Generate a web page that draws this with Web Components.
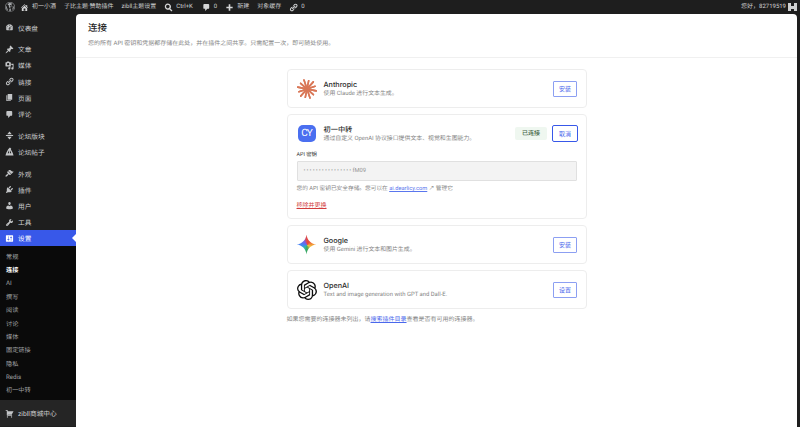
<!DOCTYPE html>
<html lang="zh-CN">
<head>
<meta charset="utf-8">
<title>连接</title>
<style>
html, body { margin: 0; height: 100%; overflow: hidden; background: #1e1e1e; }
body { font-family: Roboto, "Noto Sans CJK SC", sans-serif; text-rendering: geometricPrecision; }
</style>
</head>
<body>
<admin-app></admin-app>

<script>
const ICONS = {
  dashboard: 'M3.76 16h12.48c1.1-1.37 1.76-3.11 1.76-5 0-4.42-3.58-8-8-8s-8 3.58-8 8c0 1.89.66 3.63 1.76 5zM10 4c.55 0 1 .45 1 1s-.45 1-1 1-1-.45-1-1 .45-1 1-1zM6 6c.55 0 1 .45 1 1s-.45 1-1 1-1-.45-1-1 .45-1 1-1zm8 0c.55 0 1 .45 1 1s-.45 1-1 1-1-.45-1-1 .45-1 1-1zm-5.37 5.55L12 7v6c0 1.1-.9 2-2 2s-2-.9-2-2c0-.57.24-1.08.63-1.45zM4 10c.55 0 1 .45 1 1s-.45 1-1 1-1-.45-1-1 .45-1 1-1zm12 0c.55 0 1 .45 1 1s-.45 1-1 1-1-.45-1-1 .45-1 1-1zm-5 3c0-.55-.45-1-1-1s-1 .45-1 1 .45 1 1 1 1-.45 1-1z',
  post: 'M10.44 3.02l1.82-1.82 6.36 6.35-1.83 1.82c-1.05-.68-2.48-.57-3.41.36l-.75.75c-.92.93-1.04 2.35-.35 3.41l-1.83 1.82-2.41-2.41-2.8 2.79c-.42.42-3.38 2.71-3.8 2.29s1.86-3.39 2.28-3.81l2.79-2.79L4.1 9.36l1.83-1.82c1.05.69 2.48.57 3.4-.36l.75-.75c.93-.92 1.05-2.35.36-3.41z',
  media: 'M13 11V4c0-.55-.45-1-1-1h-1.67L9 1H5L3.67 3H2c-.55 0-1 .45-1 1v7c0 .55.45 1 1 1h10c.55 0 1-.45 1-1zM7 4.5c1.38 0 2.5 1.12 2.5 2.5S8.38 9.5 7 9.5 4.5 8.38 4.5 7 5.62 4.5 7 4.5zM14 6h5v10.5c0 1.38-1.12 2.5-2.5 2.5S14 17.88 14 16.5s1.12-2.5 2.5-2.5c.17 0 .34.02.5.05V9h-3V6zm-4 8.05V13h2v3.5c0 1.38-1.12 2.5-2.5 2.5S7 17.88 7 16.5 8.12 14 9.5 14c.17 0 .34.02.5.05z',
  links: 'M17.74 2.76c1.68 1.69 1.68 4.41 0 6.1l-1.53 1.52c-1.12 1.12-2.7 1.47-4.14 1.09l2.62-2.61.76-.77.76-.76c.84-.84.84-2.2 0-3.04-.84-.85-2.2-.85-3.04 0l-.77.76-3.38 3.38c-.37-1.44-.02-3.02 1.1-4.14l1.52-1.53c1.69-1.68 4.42-1.68 6.1 0zM8.59 13.43l5.34-5.34c.42-.42.42-1.1 0-1.52-.44-.43-1.13-.39-1.53 0l-5.33 5.34c-.42.42-.42 1.1 0 1.52.44.43 1.13.39 1.52 0zm-.76 2.29l4.14-4.15c.38 1.44.03 3.02-1.09 4.14l-1.52 1.53c-1.69 1.68-4.41 1.68-6.1 0-1.68-1.68-1.68-4.42 0-6.1l1.53-1.52c1.12-1.12 2.7-1.47 4.14-1.1l-4.14 4.15c-.85.84-.85 2.2 0 3.05.84.84 2.2.84 3.04 0z',
  page: 'M6 15V2h10v13H6zm-1 1h8v2H3V5h2v11z',
  comment: 'M5 2h9c1.1 0 2 .9 2 2v7c0 1.1-.9 2-2 2h-2l-5 5v-5H5c-1.1 0-2-.9-2-2V4c0-1.1.9-2 2-2z',
  board: 'M10 1l5 6H5zM2 8.8h16v2.4H2zM5 13h10l-5 6z',
  topic: 'M11 1l3 3-1 1 4 8 2 6H1l2-6 4-8zM9 7l-3 7h3zm2 0v7h3z',
  appearance: 'M14.48 11.06L7.41 3.99l1.5-1.5c.5-.56 2.3-.47 3.51.32 1.21.8 1.43 1.28 2.91 2.1 1.18.64 2.45 1.26 4.45.85zm-.71.71L6.7 4.7 4.93 6.47c-.39.39-.39 1.02 0 1.41l1.06 1.06c.39.39.39 1.03 0 1.42-.6.6-1.43 1.11-2.21 1.69-.35.26-.7.53-1.01.84-1.32 1.32-2.2 3.2-1.5 3.9.7.7 2.58-.18 3.9-1.5.31-.31.58-.66.84-1.01.58-.78 1.09-1.61 1.69-2.21.39-.39 1.03-.39 1.42 0l1.06 1.06c.39.39 1.02.39 1.41 0z',
  plugins: 'M13.11 4.36L9.87 7.6 8 5.73l3.24-3.24c.35-.34 1.05-.2 1.56.32.52.51.66 1.21.31 1.55zm-8 1.77l.91-1.12 9.01 9.01-1.19.84c-.71.71-2.63 1.16-3.82 1.16H6.14L4.9 17.26c-.59.59-1.54.59-2.12 0-.59-.58-.59-1.53 0-2.12l1.24-1.24v-3.88c0-1.13.4-3.19 1.09-3.89zm7.26 3.97l3.24-3.24c.34-.35 1.04-.21 1.55.31.52.51.66 1.21.31 1.55l-3.24 3.25z',
  users: 'M10 9.25c-2.27 0-2.73-3.44-2.73-3.44C7 4.02 7.82 2 9.97 2c2.16 0 2.98 2.02 2.71 3.81 0 0-.41 3.44-2.68 3.44zm0 2.57L12.72 10c2.39 0 4.52 2.33 4.52 4.53v2.49s-3.65 1.13-7.24 1.13c-3.65 0-7.24-1.13-7.24-1.13v-2.49c0-2.25 1.94-4.48 4.47-4.48z',
  tools: 'M16.68 9.77c-1.34 1.34-3.3 1.67-4.95.99l-5.41 6.52c-.99.99-2.59.99-3.58 0s-.99-2.59 0-3.57l6.52-5.42c-.68-1.65-.35-3.61.99-4.95 1.28-1.28 3.12-1.62 4.72-1.06l-2.89 2.89 2.82 2.82 2.86-2.87c.53 1.58.18 3.39-1.08 4.65zM3.81 16.21c.4.39 1.04.39 1.43 0 .4-.4.4-1.04 0-1.43-.39-.4-1.03-.4-1.43 0-.39.39-.39 1.03 0 1.43z',
  settings: 'M18 16V4c0-.55-.45-1-1-1H3c-.55 0-1 .45-1 1v12c0 .55.45 1 1 1h14c.55 0 1-.45 1-1zM8 11h1c.55 0 1 .45 1 1s-.45 1-1 1H8v1.5c0 .28-.22.5-.5.5s-.5-.22-.5-.5V13H6c-.55 0-1-.45-1-1s.45-1 1-1h1V5.5c0-.28.22-.5.5-.5s.5.22.5.5V11zm5-2h-1c-.55 0-1-.45-1-1s.45-1 1-1h1V5.5c0-.28.22-.5.5-.5s.5.22.5.5V7h1c.55 0 1 .45 1 1s-.45 1-1 1h-1v5.5c0 .28-.22.5-.5.5s-.5-.22-.5-.5V9z',
  cart: 'M6 13h9c.55 0 1 .45 1 1s-.45 1-1 1H5c-.55 0-1-.45-1-1V4H2c-.55 0-1-.45-1-1s.45-1 1-1h3c.55 0 1 .45 1 1v2h13l-4 7H6v1zm-.5 3c.83 0 1.5.67 1.5 1.5S6.33 19 5.5 19 4 18.33 4 17.5 4.67 16 5.5 16zm9 0c.83 0 1.5.67 1.5 1.5s-.67 1.5-1.5 1.5-1.5-.67-1.5-1.5.67-1.5 1.5-1.5z',
  home: 'M16 8.5l1.53 1.53-1.06 1.06L10 4.62l-6.47 6.47-1.06-1.06L10 2.5l4 4v-2h2v4zm-6-2.46l6 5.99V18H4v-5.97zM12 17v-5H8v5h4z',
  search: 'M8.5 1a7 7 0 0 1 5.6 11.2l4.6 4.6-2 2-4.6-4.6A7 7 0 1 1 8.5 1zm0 3a4 4 0 1 0 0 8 4 4 0 0 0 0-8z',
  plus: 'M17 8.2v3.6h-5.2V17H8.2v-5.2H3V8.2h5.2V3h3.6v5.2z',
  wp: 'M20 10a10 10 0 1 1-20 0 10 10 0 0 1 20 0zm-1 0a9 9 0 1 0-18 0 9 9 0 0 0 18 0zM2.5 7l3.8 10.3c-2.5-1.2-4.2-3.9-4.2-7.3 0-1 .1-2.1.4-3zm13.4 5.4-.7 2.2-2.7-8c.4 0 .8-.1.8-.1.4 0 .4-.6 0-.6 0 0-1.2.1-2 .1-.7 0-1.9-.1-1.9-.1-.4 0-.4.6 0 .6 0 0 .4.1.8.1l1.1 3.1-1.6 4.8-2.7-7.9c.4 0 .8-.1.8-.1.4 0 .4-.6 0-.6 0 0-1.2.1-2 .1h-.5C5.7 2.8 7.7 1.9 10 1.9c1.8 0 3.4.6 4.7 1.7-1 0-1.6.8-1.6 1.7 0 .8.4 1.4.9 2.2.4.7.8 1.5.8 2.7 0 .8-.3 1.7-.9 2.2zM10.1 10.9l2.3 6.3.1.1c-.8.3-1.6.4-2.5.4-.7 0-1.4-.1-2.1-.3zm6.6-4.4c.8 1.2 1.2 2.1 1.2 3.5 0 2.6-1.3 4.9-3.4 6.2l2.1-6c.4-1 .5-1.8.5-2.5 0-.2 0-.5-.4-1.2z'
};

function icon(name, size) {
  return `<svg width="${size}" height="${size}" viewBox="0 0 20 20" fill="currentColor"><path fill-rule="evenodd" d="${ICONS[name]}"/></svg>`;
}

class AdminBar extends HTMLElement {
  connectedCallback() {
    this.attachShadow({mode: 'open'});
    this.shadowRoot.innerHTML = `
      <style>
        :host { display: flex; align-items: center; height: 14px; background: #1e1e1e; color: #cfd0d1;
                font-size: 6px; line-height: 14px; white-space: nowrap; }
        .wp { display: flex; width: 20px; justify-content: center; color: #a7aaad; }
        .it { display: flex; align-items: center; gap: 3px; margin-right: 8px; }
        .it svg { color: #d5d6d7; }
        .ctrl { margin-right: 9px; }
        .right { margin-left: auto; display: flex; align-items: center; gap: 2px; padding-right: 3px; }
        .avatar { display: block; width: 9px; height: 8px; background:
          linear-gradient(#1e1e1e,#1e1e1e) 50% 0/3px 3px no-repeat,
          linear-gradient(#1e1e1e,#1e1e1e) 50% 100%/3px 2px no-repeat, #cfd0d1; }
      </style>
      <span class="wp">${icon('wp', 10)}</span>
      <span class="it">${icon('home', 9)}初一小酒</span>
      <span class="it">子比主题·赞助插件</span>
      <span class="it">zibll主题设置</span>
      <span class="it ctrl">${icon('search', 9)}Ctrl+K</span>
      <span class="it">${icon('comment', 9)}0</span>
      <span class="it">${icon('plus', 9)}新建</span>
      <span class="it">对象缓存</span>
      <span class="it">${icon('links', 9)}0</span>
      <span class="right">您好，82719519<span class="avatar"></span></span>
    `;
  }
}

class SideItem extends HTMLElement {
  connectedCallback() {
    const active = this.hasAttribute('active');
    this.attachShadow({mode: 'open'});
    this.shadowRoot.innerHTML = `
      <style>
        :host { display: flex; align-items: center; height: 16.2px; color: #cfd0d1; font-size: 6.7px;
                white-space: nowrap; position: relative; }
        :host([active]) { background: #3858e9; color: #fff; }
        :host([shade]) { background: #252525; height: 26px; }
        .ic { display: flex; width: 18px; justify-content: center; color: #c3c5c7; flex: none; }
        :host([active]) .ic { color: #fff; }
        .arrow { position: absolute; right: 0; top: 50%; margin-top: -4px; border: 4px solid transparent;
                 border-right-color: #fff; border-left-width: 0; }
      </style>
      <span class="ic">${icon(this.getAttribute('icon'), 9)}</span><slot></slot>
      ${active ? '<span class="arrow"></span>' : ''}
    `;
  }
}

class SubItem extends HTMLElement {
  connectedCallback() {
    this.attachShadow({mode: 'open'});
    this.shadowRoot.innerHTML = `
      <style>
        :host { display: flex; align-items: center; height: 13.35px; padding-left: 6px; color: #a0a2a4;
                font-size: 6.2px; white-space: nowrap; }
        :host([current]) { color: #fff; font-weight: 600; }
      </style>
      <slot></slot>
    `;
  }
}

class SideBar extends HTMLElement {
  connectedCallback() {
    this.attachShadow({mode: 'open'});
    this.shadowRoot.innerHTML = `
      <style>
        :host { display: block; width: 76px; flex: none; background: #1e1e1e; overflow: hidden; }
        .group { display: block; margin-top: 5.5px; }
        .group:first-child { margin-top: 6px; }
        .sub { background: #0a0a0a; padding: 3.4px 0 3.6px; }
      </style>
      <div class="group"><side-item icon="dashboard">仪表盘</side-item></div>
      <div class="group">
        <side-item icon="post">文章</side-item>
        <side-item icon="media">媒体</side-item>
        <side-item icon="links">链接</side-item>
        <side-item icon="page">页面</side-item>
        <side-item icon="comment">评论</side-item>
      </div>
      <div class="group">
        <side-item icon="board">论坛版块</side-item>
        <side-item icon="topic">论坛帖子</side-item>
      </div>
      <div class="group">
        <side-item icon="appearance">外观</side-item>
        <side-item icon="plugins">插件</side-item>
        <side-item icon="users">用户</side-item>
        <side-item icon="tools">工具</side-item>
        <side-item icon="settings" active>设置</side-item>
        <div class="sub">
          <sub-item>常规</sub-item>
          <sub-item current>连接</sub-item>
          <sub-item>AI</sub-item>
          <sub-item>撰写</sub-item>
          <sub-item>阅读</sub-item>
          <sub-item>讨论</sub-item>
          <sub-item>媒体</sub-item>
          <sub-item>固定链接</sub-item>
          <sub-item>隐私</sub-item>
          <sub-item>Redis</sub-item>
          <sub-item>初一中转</sub-item>
        </div>
      </div>
      <side-item icon="cart" shade>zibll商城中心</side-item>
    `;
  }
}

class ConnectorCard extends HTMLElement {
  connectedCallback() {
    const name = this.getAttribute('name');
    const desc = this.getAttribute('desc');
    const action = this.getAttribute('action');
    const connected = this.hasAttribute('connected');
    this.attachShadow({mode: 'open'});
    this.shadowRoot.innerHTML = `
      <style>
        :host { display: block; background: #fff; border: 1px solid #ededed; border-radius: 4px; padding: 0 7.5px 0 9px; }
        .head { display: flex; align-items: center; height: 37px; }
        .logo { display: flex; width: 20px; height: 20px; align-items: center; justify-content: center; flex: none; margin-right: 7px; }
        .txt { flex: 1; min-width: 0; padding-top: 1px; }
        .name { font-family: Inter, "Noto Sans CJK SC", sans-serif; font-size: 7.2px; line-height: 10px; font-weight: 500; color: #2a2a2a; }
        .desc { font-size: 5.9px; line-height: 8px; color: #858585; }
        .badge { font-size: 6px; line-height: 13px; padding: 0 7px; background: #eff7f0; color: #3f6646;
                 border-radius: 2px; margin-right: 5px; font-weight: 500; }
        button { font: inherit; font-size: 6px; width: 24px; height: 16px; padding: 0; background: #fff; color: #4a68ec;
                 border: 1px solid #8c9ff2; border-radius: 1px; margin-right: 1px; }
        button.on { width: 26px; height: 17px; border-color: #3858e9; margin-right: 0; border-radius: 2px; }
      </style>
      <div class="head">
        <span class="logo"><slot name="logo"></slot></span>
        <div class="txt"><div class="name">${name}</div><div class="desc">${desc}</div></div>
        ${connected ? '<span class="badge">已连接</span>' : ''}
        <button class="${connected ? 'on' : ''}">${action}</button>
      </div>
      <slot></slot>
    `;
  }
}

class KeyPanel extends HTMLElement {
  connectedCallback() {
    this.attachShadow({mode: 'open'});
    this.shadowRoot.innerHTML = `
      <style>
        :host { display: block; padding: 0 1.5px 8px 0; }
        .label { font-size: 5.4px; line-height: 8px; color: #333; margin-top: -1px; }
        .input { height: 20px; box-sizing: border-box; margin-top: 2px; padding: 0 6px; background: #f3f3f3;
                 border: 1px solid #e0e0e0; font-size: 5.8px; color: #939393; border-radius: 1px; line-height: 18px; }
        .dots { letter-spacing: 1.1px; }
        .help { font-size: 5.7px; line-height: 8px; margin-top: 4px; color: #858585; }
        a { color: #5a76ee; text-decoration: underline; text-decoration-thickness: .5px; }
        a.rm { display: block; color: #d23c3c; font-size: 6px; line-height: 9px; margin-top: 8px; }
      </style>
      <div class="label">API 密钥</div>
      <div class="input"><span class="dots">••••••••••••••••</span>fM09</div>
      <div class="help">您的 API 密钥已安全存储。您可以在 <a>ai.dearlicy.com</a> ↗ 管理它</div>
      <a class="rm">移除并更换</a>
    `;
  }
}

class ConnectionsPage extends HTMLElement {
  connectedCallback() {
    this.attachShadow({mode: 'open'});
    const ray = [];
    for (let i = 0; i < 12; i++) {
      const a = i * Math.PI / 6 + .2;
      const r = i % 2 ? 8.5 : 9.5;
      ray.push(`<line x1="${(10 - Math.cos(a) * r).toFixed(1)}" y1="${(10 - Math.sin(a) * r).toFixed(1)}" x2="${(10 + Math.cos(a) * r).toFixed(1)}" y2="${(10 + Math.sin(a) * r).toFixed(1)}"/>`);
    }
    this.shadowRoot.innerHTML = `
      <style>
        :host { display: block; flex: 1; min-width: 0; background: #fff; margin-right: 3px; border-radius: 4px 4px 0 0; overflow: hidden; color: #1e1e1e; }
        header { height: 44px; box-sizing: border-box; padding: 9px 12px 0; border-bottom: 1px solid #f0f0f0; }
        h1 { margin: 0; font-size: 9.5px; line-height: 12px; font-weight: 500; }
        header p { margin: 5px 0 0; font-size: 6px; line-height: 8px; color: #858585; }
        .list { width: 300px; margin: 11px auto 0; display: flex; flex-direction: column; gap: 6px; }
        connector-card { box-sizing: border-box; }
        .foot { margin: 1px 0 0; font-size: 6px; line-height: 8px; color: #858585; }
        .foot a { color: #4a68ec; text-decoration: underline; text-decoration-thickness: .5px; }
        .cy { display: flex; width: 18px; height: 17px; border-radius: 5px; background: #4a6ff0; color: #fff; font-size: 10px;
              font-weight: 400; align-items: center; justify-content: center; letter-spacing: -1px; }
        .gem { display: block; width: 20px; height: 20px;
               background: conic-gradient(from 0deg, #e9493b 0 10%, #f2a33a 25%, #f4c542 32%, #3ba55d 50%, #2fbb9c 60%, #4285f4 75%, #7b5ee6 90%, #e9493b);
               clip-path: path('M10 0C10.6 5.6 14.4 9.4 20 10 14.4 10.6 10.6 14.4 10 20 9.4 14.4 5.6 10.6 0 10 5.6 9.4 9.4 5.6 10 0Z'); }
      </style>
      <header>
        <h1>连接</h1>
        <p>您的所有 API 密钥和凭据都存储在此处，并在插件之间共享。只需配置一次，即可随处使用。</p>
      </header>
      <div class="list">
        <connector-card name="Anthropic" desc="使用 Claude 进行文本生成。" action="安装">
          <svg slot="logo" width="20" height="20" viewBox="0 0 20 20" stroke="#d97757" stroke-width="1.6" stroke-linecap="round">${ray.join('')}</svg>
        </connector-card>
        <connector-card name="初一中转" desc="通过自定义 OpenAI 协议接口提供文本、视觉和生图能力。" action="取消" connected>
          <span slot="logo" class="cy">CY</span>
          <key-panel></key-panel>
        </connector-card>
        <connector-card name="Google" desc="使用 Gemini 进行文本和图片生成。" action="安装">
          <span slot="logo" class="gem"></span>
        </connector-card>
        <connector-card name="OpenAI" desc="Text and image generation with GPT and Dall-E." action="设置">
          <svg slot="logo" width="20" height="20" viewBox="0 0 24 24" fill="#0d0d0d"><path d="M22.2819 9.8211a5.9847 5.9847 0 0 0-.5157-4.9108 6.0462 6.0462 0 0 0-6.5098-2.9A6.0651 6.0651 0 0 0 4.9807 4.1818a5.9847 5.9847 0 0 0-3.9977 2.9 6.0462 6.0462 0 0 0 .7427 7.0966 5.98 5.98 0 0 0 .511 4.9107 6.051 6.051 0 0 0 6.5146 2.9001A5.9847 5.9847 0 0 0 13.2599 24a6.0557 6.0557 0 0 0 5.7718-4.2058 5.9894 5.9894 0 0 0 3.9977-2.9001 6.0557 6.0557 0 0 0-.7475-7.0729zm-9.022 12.6081a4.4755 4.4755 0 0 1-2.8764-1.0408l.1419-.0804 4.7783-2.7582a.7948.7948 0 0 0 .3927-.6813v-6.7369l2.02 1.1686a.071.071 0 0 1 .038.052v5.5826a4.504 4.504 0 0 1-4.4945 4.4944zm-9.6607-4.1254a4.4708 4.4708 0 0 1-.5346-3.0137l.142.0852 4.783 2.7582a.7712.7712 0 0 0 .7806 0l5.8428-3.3685v2.3324a.0804.0804 0 0 1-.0332.0615L9.74 19.9502a4.4992 4.4992 0 0 1-6.1408-1.6464zM2.3408 7.8956a4.485 4.485 0 0 1 2.3655-1.9728V11.6a.7664.7664 0 0 0 .3879.6765l5.8144 3.3543-2.0201 1.1685a.0757.0757 0 0 1-.071 0l-4.8303-2.7865A4.504 4.504 0 0 1 2.3408 7.872zm16.5963 3.8558L13.1038 8.364 15.1192 7.2a.0757.0757 0 0 1 .071 0l4.8303 2.7913a4.4944 4.4944 0 0 1-.6765 8.1042v-5.6772a.79.79 0 0 0-.407-.667zm2.0107-3.0231l-.142-.0852-4.7735-2.7818a.7759.7759 0 0 0-.7854 0L9.409 9.2297V6.8974a.0662.0662 0 0 1 .0284-.0615l4.8303-2.7866a4.4992 4.4992 0 0 1 6.6802 4.66zM8.3065 12.863l-2.02-1.1638a.0804.0804 0 0 1-.038-.0567V6.0742a4.4992 4.4992 0 0 1 7.3757-3.4537l-.142.0805L8.704 5.459a.7948.7948 0 0 0-.3927.6813zm1.0976-2.3654l2.602-1.4998 2.6069 1.4998v2.9994l-2.5974 1.4997-2.6067-1.4997Z"/></svg>
        </connector-card>
        <p class="foot">如果您需要的连接器未列出，请<a>搜索插件目录</a>查看是否有可用的连接器。</p>
      </div>
    `;
  }
}

class AdminApp extends HTMLElement {
  connectedCallback() {
    this.attachShadow({mode: 'open'});
    this.shadowRoot.innerHTML = `
      <style>
        :host { display: flex; flex-direction: column; height: 100vh; overflow: hidden; }
        .body { flex: 1; display: flex; min-height: 0; }
      </style>
      <admin-bar></admin-bar>
      <div class="body">
        <side-bar></side-bar>
        <connections-page></connections-page>
      </div>
    `;
  }
}

customElements.define('side-item', SideItem);
customElements.define('sub-item', SubItem);
customElements.define('side-bar', SideBar);
customElements.define('admin-bar', AdminBar);
customElements.define('key-panel', KeyPanel);
customElements.define('connector-card', ConnectorCard);
customElements.define('connections-page', ConnectionsPage);
customElements.define('admin-app', AdminApp);
</script>
</body>
</html>
